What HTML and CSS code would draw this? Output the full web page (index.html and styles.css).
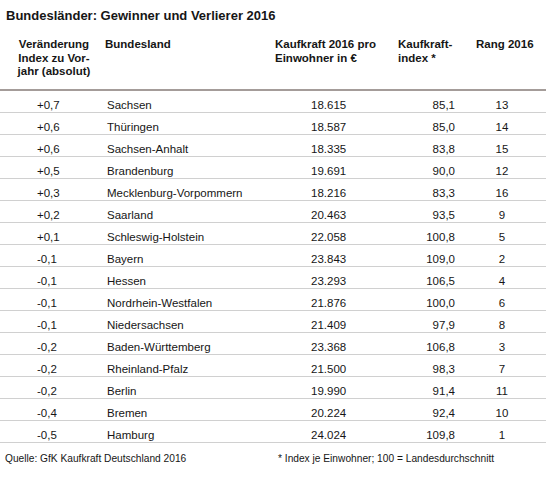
FILE: index.html
```html
<!DOCTYPE html>
<html lang="de">
<head>
<meta charset="utf-8">
<title>Bundesländer: Gewinner und Verlierer 2016</title>
<link rel="stylesheet" href="styles.css">
</head>
<body>
<div class="page">
  <h1 class="title">Bundesländer: Gewinner und Verlierer 2016</h1>
  <div class="table">
    <div class="row head">
      <div class="c1">Veränderung<br>Index zu Vor-<br>jahr (absolut)</div>
      <div class="c2">Bundesland</div>
      <div class="c3">Kaufkraft 2016 pro<br>Einwohner in €</div>
      <div class="c4">Kaufkraft-<br>index *</div>
      <div class="c5">Rang 2016</div>
    </div>
    <div class="row"><div class="c1">+0,7</div><div class="c2">Sachsen</div><div class="c3">18.615</div><div class="c4">85,1</div><div class="c5">13</div></div>
    <div class="row"><div class="c1">+0,6</div><div class="c2">Thüringen</div><div class="c3">18.587</div><div class="c4">85,0</div><div class="c5">14</div></div>
    <div class="row"><div class="c1">+0,6</div><div class="c2">Sachsen-Anhalt</div><div class="c3">18.335</div><div class="c4">83,8</div><div class="c5">15</div></div>
    <div class="row"><div class="c1">+0,5</div><div class="c2">Brandenburg</div><div class="c3">19.691</div><div class="c4">90,0</div><div class="c5">12</div></div>
    <div class="row"><div class="c1">+0,3</div><div class="c2">Mecklenburg-Vorpommern</div><div class="c3">18.216</div><div class="c4">83,3</div><div class="c5">16</div></div>
    <div class="row"><div class="c1">+0,2</div><div class="c2">Saarland</div><div class="c3">20.463</div><div class="c4">93,5</div><div class="c5">9</div></div>
    <div class="row"><div class="c1">+0,1</div><div class="c2">Schleswig-Holstein</div><div class="c3">22.058</div><div class="c4">100,8</div><div class="c5">5</div></div>
    <div class="row"><div class="c1">-0,1</div><div class="c2">Bayern</div><div class="c3">23.843</div><div class="c4">109,0</div><div class="c5">2</div></div>
    <div class="row"><div class="c1">-0,1</div><div class="c2">Hessen</div><div class="c3">23.293</div><div class="c4">106,5</div><div class="c5">4</div></div>
    <div class="row"><div class="c1">-0,1</div><div class="c2">Nordrhein-Westfalen</div><div class="c3">21.876</div><div class="c4">100,0</div><div class="c5">6</div></div>
    <div class="row"><div class="c1">-0,1</div><div class="c2">Niedersachsen</div><div class="c3">21.409</div><div class="c4">97,9</div><div class="c5">8</div></div>
    <div class="row"><div class="c1">-0,2</div><div class="c2">Baden-Württemberg</div><div class="c3">23.368</div><div class="c4">106,8</div><div class="c5">3</div></div>
    <div class="row"><div class="c1">-0,2</div><div class="c2">Rheinland-Pfalz</div><div class="c3">21.500</div><div class="c4">98,3</div><div class="c5">7</div></div>
    <div class="row"><div class="c1">-0,2</div><div class="c2">Berlin</div><div class="c3">19.990</div><div class="c4">91,4</div><div class="c5">11</div></div>
    <div class="row"><div class="c1">-0,4</div><div class="c2">Bremen</div><div class="c3">20.224</div><div class="c4">92,4</div><div class="c5">10</div></div>
    <div class="row"><div class="c1">-0,5</div><div class="c2">Hamburg</div><div class="c3">24.024</div><div class="c4">109,8</div><div class="c5">1</div></div>
  </div>
  <div class="footer">
    <span class="source">Quelle: GfK Kaufkraft Deutschland 2016</span>
    <span class="note">* Index je Einwohner; 100 = Landesdurchschnitt</span>
  </div>
</div>
</body>
</html>
```

FILE: styles.css
```css
html, body {
  margin: 0;
  padding: 0;
  background: #ffffff;
}

body {
  font-family: "Liberation Sans", Arial, sans-serif;
  color: #161616;
}

.page {
  width: 550px;
}

.title {
  margin: 0;
  padding: 8px 0 0 6px;
  font-size: 13px;
  line-height: 16px;
  font-weight: bold;
}

.table {
  width: 546px;
}

.row {
  display: grid;
  grid-template-columns: 105px 170px 123px 78px 70px;
  font-size: 11.5px;
  line-height: 14px;
  height: 14px;
  padding-top: 7px;
  border-bottom: 1px solid #d0d0d0;
}

.row.head {
  font-weight: bold;
  line-height: 13.5px;
  height: auto;
  padding-top: 14px;
  padding-bottom: 10.5px;
  border-bottom: 2px solid #a49c99;
}

.row .c1 { padding-left: 37px; }
.row .c2 { padding-left: 2px; }
.row .c3 { padding-left: 36px; }
.row .c4 { text-align: right; padding-right: 21px; }
.row .c5 { text-align: center; padding-right: 18px; }

.row.head .c1 { padding-left: 3px; text-align: center; }
.row.head .c2 { padding-left: 0; }
.row.head .c3 { padding-left: 0; }
.row.head .c4 { text-align: left; padding-right: 0; }
.row.head .c5 { text-align: left; padding-right: 0; white-space: nowrap; }

.footer {
  display: flex;
  padding-top: 10px;
  font-size: 10.2px;
  line-height: 12px;
}

.source {
  width: 273px;
  padding-left: 5px;
}
```
